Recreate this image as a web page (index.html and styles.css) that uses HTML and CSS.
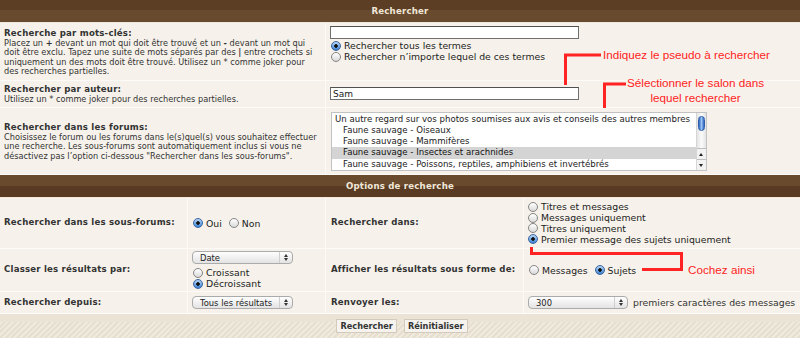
FILE: index.html
```html
<!DOCTYPE html>
<html lang="fr">
<head>
<meta charset="UTF-8" />
<title>Rechercher</title>
<link rel="stylesheet" href="styles.css">
</head>
<body>
<div class="page">

  <div class="cat cat-top">Rechercher</div>

  <div class="row row-kw">
    <div class="lbl">
      <b class="t">Recherche par mots-clés:</b>
      <p>Placez un <b>+</b> devant un mot qui doit être trouvé et un <b>-</b> devant un mot qui<br>doit être exclu. Tapez une suite de mots séparés par des <b>|</b> entre crochets si<br>uniquement un des mots doit être trouvé. Utilisez un * comme joker pour<br>des recherches partielles.</p>
    </div>
    <div class="fld fld-top">
      <input class="txt" type="text">
      <label class="opt"><input class="rd" type="radio" name="terms" checked>Rechercher tous les termes</label>
      <label class="opt"><input class="rd" type="radio" name="terms">Rechercher n’importe lequel de ces termes</label>
    </div>
  </div>

  <div class="row row-au">
    <div class="lbl">
      <b class="t">Rechercher par auteur:</b>
      <p>Utilisez un * comme joker pour des recherches partielles.</p>
    </div>
    <div class="fld">
      <input class="txt" type="text" value="Sam">
    </div>
  </div>

  <div class="row row-fo">
    <div class="lbl">
      <b class="t">Rechercher dans les forums:</b>
      <p>Choisissez le forum ou les forums dans le(s)quel(s) vous souhaitez effectuer<br>une recherche. Les sous-forums sont automatiquement inclus si vous ne<br>désactivez pas l’option ci-dessous "Rechercher dans les sous-forums".</p>
    </div>
    <div class="fld">
      <div class="lst">
        <ul>
          <li class="top">Un autre regard sur vos photos soumises aux avis et conseils des autres membres</li>
          <li>Faune sauvage - Oiseaux</li>
          <li>Faune sauvage - Mammifères</li>
          <li class="sel">Faune sauvage - Insectes et arachnides</li>
          <li>Faune sauvage - Poissons, reptiles, amphibiens et invertébrés</li>
        </ul>
        <div class="sb">
          <span class="thumb"></span>
          <span class="track"></span>
          <span class="step up"></span>
          <span class="step dn"></span>
        </div>
      </div>
    </div>
  </div>

  <div class="cat cat-opt">Options de recherche</div>

  <div class="opts">
    <div class="c k">Rechercher dans les sous-forums:</div>
    <div class="c">
      <label class="opt inl"><input class="rd" type="radio" name="sub" checked>Oui</label>
      <label class="opt inl"><input class="rd" type="radio" name="sub">Non</label>
    </div>
    <div class="c k c3">Rechercher dans:</div>
    <div class="c c4 col">
      <label class="opt sm"><input class="rd" type="radio" name="in">Titres et messages</label>
      <label class="opt sm"><input class="rd" type="radio" name="in">Messages uniquement</label>
      <label class="opt sm"><input class="rd" type="radio" name="in">Titres uniquement</label>
      <label class="opt sm"><input class="rd" type="radio" name="in" checked>Premier message des sujets uniquement</label>
    </div>

    <div class="c k">Classer les résultats par:</div>
    <div class="c col">
      <span class="pop">Date<i></i></span>
      <label class="opt"><input class="rd" type="radio" name="ord">Croissant</label>
      <label class="opt"><input class="rd" type="radio" name="ord" checked>Décroissant</label>
    </div>
    <div class="c k c3">Afficher les résultats sous forme de:</div>
    <div class="c c4">
      <label class="opt inl"><input class="rd" type="radio" name="as">Messages</label>
      <label class="opt inl"><input class="rd" type="radio" name="as" checked>Sujets</label>
    </div>

    <div class="c k">Rechercher depuis:</div>
    <div class="c">
      <span class="pop">Tous les résultats<i></i></span>
    </div>
    <div class="c k c3">Renvoyer les:</div>
    <div class="c c4">
      <span class="pop">300<i></i></span>
      <span class="after">premiers caractères des messages</span>
    </div>
  </div>

  <div class="foot">
    <button class="btn">Rechercher</button>
    <button class="btn">Réinitialiser</button>
  </div>

  <!-- annotations rouges par-dessus le formulaire -->
  <svg class="marks" width="800" height="338" viewBox="0 0 800 338">
    <path d="M565.5 85 V55 H601" />
    <path d="M604.5 108 V84 H626" />
    <path d="M531.5 247 V253.5 H681.5 V269.5 H642" />
  </svg>
  <span class="note n1">Indiquez le pseudo à rechercher</span>
  <span class="note n2">Sélectionner le salon dans<br>lequel rechercher</span>
  <span class="note n3">Cochez ainsi</span>
</div>
</body>
</html>
```

FILE: styles.css
```css
/*-- base --*/
* { box-sizing: border-box; }
body {
  margin: 0;
  background: #f6f2eb;
  font: 8.2px/9.3px "DejaVu Sans", Verdana, sans-serif;
  color: #333;
}
.page { position: relative; width: 800px; height: 338px; overflow: hidden; }

/* le gras de Verdana est plus large que celui de DejaVu */
.lbl .t, .c.k, .cat { font-size: 8.6px; letter-spacing: 0.2px; }

/*-- bandeaux --*/
.cat {
  height: 23px; line-height: 22px;
  text-align: center; font-weight: bold; color: #f1e8da;
  border-bottom: 1px solid #efe9df;
}
.cat-top { background: linear-gradient(#5c3e25 0 45%, #684a2f 45%); }
.cat-opt { background: linear-gradient(#6a4a2d 0 50%, #583b22 50%); }

/*-- lignes du haut --*/
.row     { display: grid; grid-template-columns: 326px 1fr; border-bottom: 1px solid #fdfbf8; }
.row-kw  { height: 58px; }
.row-au  { height: 27px; }
.row-fo  { height: 67px; }

.lbl {
  display: flex; flex-direction: column; justify-content: center;
  padding: 0 4px; border-right: 1px solid #fdfbf8;
}
.lbl .t  { display: block; line-height: 12px; }
.lbl p   { margin: 0; white-space: nowrap; }

.fld     { display: flex; flex-direction: column; justify-content: center; align-items: flex-start; padding-left: 4px; }
.fld-top { justify-content: flex-start; padding-top: 3px; }

/*-- champs --*/
.txt {
  width: 249px; height: 13px; margin: 0 0 1px;
  padding: 0 2px; border: 1px solid #6f6f6f; border-top-color: #505050;
  background: #fff; font: 9px "DejaVu Sans", sans-serif; color: #222;
}
.opt {
  display: flex; align-items: center; height: 11px; margin-left: 1px;
  font: 9.3px/11px "DejaVu Sans", sans-serif; color: #222; white-space: nowrap;
}
.opt.sm  { height: 10.7px; }
.opt.inl { display: inline-flex; margin-right: 6px; }

.rd {
  appearance: none; -webkit-appearance: none;
  width: 10px; height: 10px; margin: 0 3px 0 0; flex: none;
  border: 1px solid #858585; border-radius: 50%;
  background: linear-gradient(#ffffff, #d9d9d9);
}
.rd:checked {
  border-color: #3c659f;
  background: radial-gradient(circle, #111 0 1.5px, transparent 2px), linear-gradient(#b6d6f6, #3b82d4);
}

/*-- liste des forums --*/
.lst {
  display: flex; width: 376px; height: 59px; margin-left: 1px;
  border: 1px solid #c2c2c2; background: #fff;
  font: 8.6px/11.3px "DejaVu Sans", sans-serif; color: #222;
}
.lst ul     { flex: 1; margin: 0; padding: 1px 0 0; list-style: none; overflow: hidden; }
.lst li     { height: 11.3px; padding-left: 11px; white-space: nowrap; }
.lst li.top { padding-left: 3px; }
.lst li.sel { background: #d4d4d4; color: #111; }

.sb { display: flex; flex-direction: column; width: 10px; border-left: 1px solid #d6d6d6; background: linear-gradient(90deg, #e4e4e4, #fafafa, #e4e4e4); }
.sb .thumb { height: 15px; margin: 3px 1px 0; border-radius: 4px; border: 1px solid #2f5ea6; background: linear-gradient(90deg, #2d66c4, #9cc4f2, #2d66c4); }
.sb .track { flex: 1; }
.sb .step  { position: relative; height: 11px; border-top: 1px solid #bdbdbd; background: #f2f2f2; }
.sb .step::before {
  content: ""; position: absolute; left: 2px; top: 4px;
  border-left: 2.5px solid transparent; border-right: 2.5px solid transparent;
}
.sb .up::before { border-bottom: 3px solid #222; }
.sb .dn::before { border-top: 3px solid #222; }

/*-- options --*/
.opts {
  display: grid;
  grid-template-columns: 188px 138px 198px 1fr;
  grid-template-rows: 51px 43px 22px;
}
.c {
  display: flex; align-items: center; padding-left: 4px;
  border-right: 1px solid #fdfbf8; border-bottom: 1px solid #fdfbf8;
}
.c.k   { font-weight: bold; }
.c.c3  { padding-left: 5px; }
.c.c4  { border-right: none; }
.c.col { flex-direction: column; align-items: flex-start; justify-content: center; }
.c.c4.col .opt { margin-left: 0; }

.pop {
  position: relative; display: inline-flex; align-items: center;
  width: 101px; height: 13px; padding-left: 7px;
  border: 1px solid #ababab; border-radius: 4px;
  background: linear-gradient(#fefefe, #e3e3e3);
  font: 8.4px "DejaVu Sans", sans-serif; color: #222; white-space: nowrap;
}
.pop i {
  position: absolute; right: 0; top: 0; bottom: 0; width: 13px;
  border-left: 1px solid #cfcfcf;
}
.pop i::before, .pop i::after {
  content: ""; position: absolute; left: 4px;
  border-left: 2px solid transparent; border-right: 2px solid transparent;
}
.pop i::before { top: 2px; border-bottom: 3px solid #333; }
.pop i::after  { bottom: 2px; border-top: 3px solid #333; }
.c4 .pop   { margin-right: 5px; width: 100px; }
.col .pop  { margin-bottom: 3px; }
.after     { font-size: 9.3px; color: #333; }

/*-- pied --*/
.foot {
  display: flex; justify-content: center; gap: 7px; height: 24px; padding-top: 5px; padding-left: 4px;
  background:
    linear-gradient(#ebe4d6, #ebe4d6) top / 100% 8px no-repeat,
    repeating-linear-gradient(135deg, #e6dece 0 2px, #efe9de 2px 4px);
}
.btn {
  height: 14px; padding: 0 3px; margin: 0;
  border: 1px solid #d4cbbc; background: #f6f3ee;
  font: bold 8.2px "DejaVu Sans", sans-serif; color: #333;
}

/*-- annotations --*/
.marks { position: absolute; left: 0; top: 0; pointer-events: none; }
.marks path { fill: none; stroke: #ff2323; stroke-width: 3; }
.note {
  position: absolute; color: #ff2323; white-space: nowrap;
  font: 11.7px/15px "Liberation Sans", Arial, sans-serif;
}
.n1 { left: 603px; top: 47px; }
.n2 { left: 627px; top: 75px; text-align: center; }
.n3 { left: 688px; top: 262px; }
```
